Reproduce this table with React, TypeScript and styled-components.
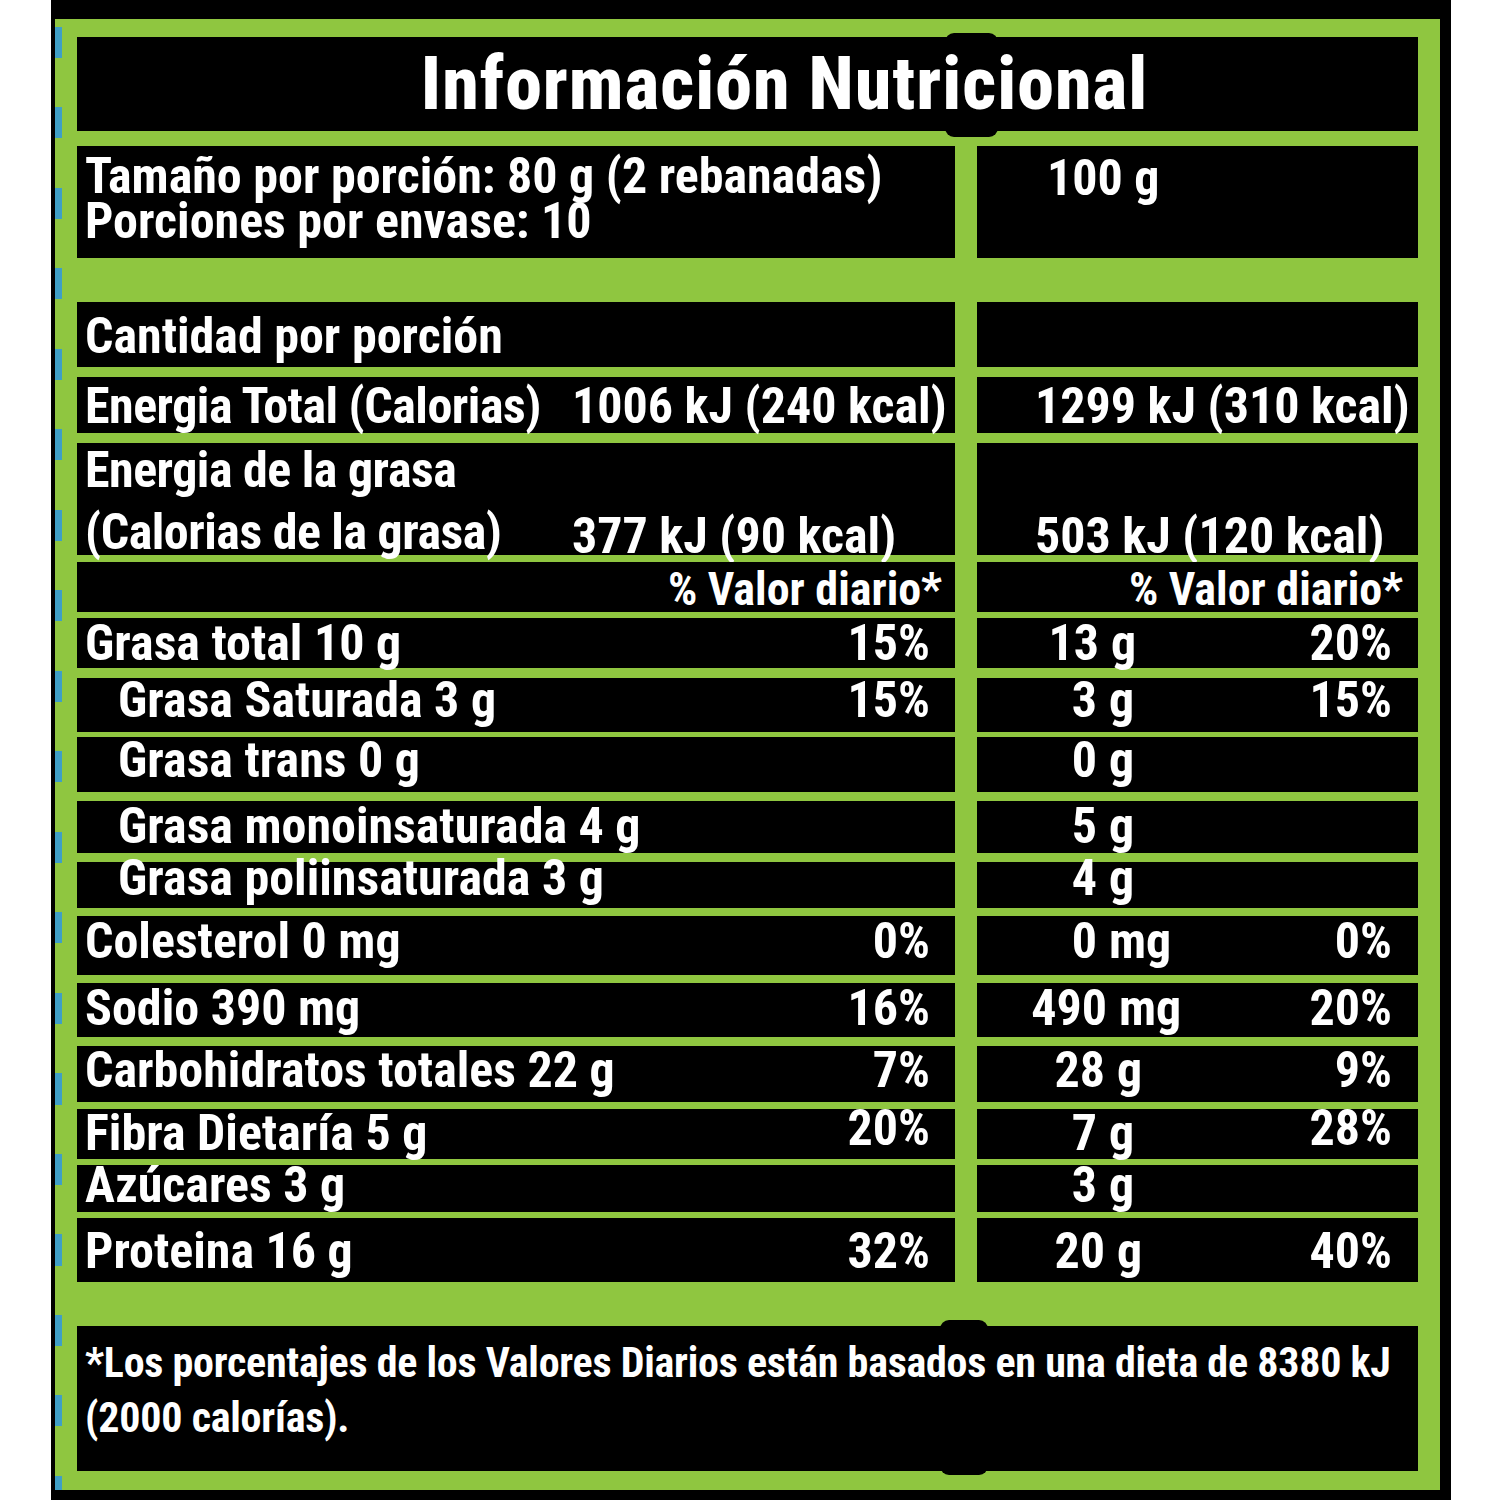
import React from "react";
import styled, { createGlobalStyle } from "styled-components";

const GREEN = "#8fc640";

const GlobalStyle = createGlobalStyle`
  html, body { margin: 0; padding: 0; background: #ffffff; }
  body {
    font-family: "Roboto Condensed", Roboto, "Liberation Sans", sans-serif;
    font-stretch: 75%;
    font-weight: 700;
    color: #ffffff;
  }
`;

const Page = styled.div`
  width: 1500px;
  height: 1500px;
  overflow: hidden;
  background: #ffffff;
  padding-left: 51px;
  box-sizing: border-box;
`;

const Panel = styled.div`
  width: 1400px;
  background: #000000;
  padding: 19px 11px 10px 4px;
  box-sizing: border-box;
`;

const Frame = styled.div`
  position: relative;
  z-index: 0;
  background: ${GREEN};
  padding: 18px 22px 19px 22px;
  &::before {
    content: "";
    position: absolute;
    left: 0;
    top: 8px;
    bottom: 0;
    width: 7px;
    background: repeating-linear-gradient(
      to bottom,
      #3f9fc6 0 31px,
      transparent 31px 80.5px
    );
  }
`;

const Blob = styled.span<{ $x: number; $y: number; $w: number; $h: number }>`
  position: absolute;
  z-index: -1;
  left: ${(p) => p.$x}px;
  top: ${(p) => p.$y}px;
  width: ${(p) => p.$w}px;
  height: ${(p) => p.$h}px;
  background: #000000;
  border-radius: 9px;
`;

const Title = styled.h1`
  margin: 0;
  height: 94px;
  background: #000000;
  font-size: 74px;
  line-height: 94px;
  font-weight: 800;
  letter-spacing: 1px;
  text-align: center;
  padding-left: 74px;
  white-space: nowrap;
`;

const Row = styled.div<{ $gap: number; $h: number }>`
  display: grid;
  grid-template-columns: 878px 441px;
  column-gap: 22px;
  margin-top: ${(p) => p.$gap}px;
  height: ${(p) => p.$h}px;
`;

const Cell = styled.div<{ $pt?: number; $size?: number; $lh?: number }>`
  background: #000000;
  box-sizing: border-box;
  padding-top: ${(p) => p.$pt ?? 0}px;
  font-size: ${(p) => p.$size ?? 50}px;
  line-height: ${(p) => p.$lh ?? 30}px;
  white-space: nowrap;
`;

const LabelCell = styled(Cell)<{ $indent?: boolean }>`
  display: grid;
  grid-template-columns: 1fr auto;
  align-items: start;
  padding-left: ${(p) => (p.$indent ? 41 : 8)}px;
  padding-right: 25px;
`;

const EnergyLeft = styled(Cell)`
  display: grid;
  grid-template-columns: 487px auto;
  align-items: start;
  padding-left: 8px;
`;

const EnergyLabel = styled.span`
  letter-spacing: -0.5px;
`;

const EnergyRight = styled(Cell)`
  padding-left: 58px;
`;

const AmountCell = styled(Cell)<{ $shift?: number }>`
  display: grid;
  grid-template-columns: 120px auto 1fr auto;
  align-items: start;
  padding-left: ${(p) => p.$shift ?? 0}px;
  padding-right: 26px;
`;

const Num = styled.span`
  text-align: right;
`;

const Unit = styled.span`
  padding-left: 12px;
`;

const Pct = styled.span<{ $raise?: number }>`
  grid-column: -2 / -1;
  text-align: right;
  margin-top: ${(p) => -(p.$raise ?? 0)}px;
`;

const Text = styled.span<{ $drop?: number }>`
  display: block;
  margin-top: ${(p) => p.$drop ?? 0}px;
`;

const DvCell = styled(Cell)<{ $right: number }>`
  text-align: right;
  padding-right: ${(p) => p.$right}px;
`;

const ServingLeft = styled(Cell)`
  padding-left: 8px;
`;

const ServingRight = styled(Cell)`
  padding-left: 70px;
`;

const Footnote = styled.div`
  margin-top: 44px;
  height: 145px;
  background: #000000;
  box-sizing: border-box;
  padding: 9px 8px 0;
  font-size: 42px;
  line-height: 55px;
  letter-spacing: -0.25px;
  white-space: nowrap;
`;

type Nutrient = {
  label: string;
  indent?: boolean;
  pct?: string;
  num: string;
  unit: string;
  pct2?: string;
  gap: number;
  h: number;
  pt: number;
  raise?: number;
  shift?: number;
};

const nutrients: Nutrient[] = [
  { label: "Grasa total 10 g", pct: "15%", num: "13", unit: "g", pct2: "20%", gap: 6, h: 50, pt: 10, shift: 2 },
  { label: "Grasa Saturada 3 g", indent: true, pct: "15%", num: "3", unit: "g", pct2: "15%", gap: 10, h: 54, pt: 7 },
  { label: "Grasa trans 0 g", indent: true, num: "0", unit: "g", gap: 5, h: 55, pt: 8 },
  { label: "Grasa monoinsaturada 4 g", indent: true, num: "5", unit: "g", gap: 9, h: 52, pt: 10 },
  { label: "Grasa poliinsaturada 3 g", indent: true, num: "4", unit: "g", gap: 9, h: 46, pt: 1 },
  { label: "Colesterol 0 mg", pct: "0%", num: "0", unit: "mg", pct2: "0%", gap: 8, h: 59, pt: 10 },
  { label: "Sodio 390 mg", pct: "16%", num: "490", unit: "mg", pct2: "20%", gap: 8, h: 54, pt: 10, shift: 10 },
  { label: "Carbohidratos totales 22 g", pct: "7%", num: "28", unit: "g", pct2: "9%", gap: 9, h: 56, pt: 9, shift: 8 },
  { label: "Fibra Dietaría 5 g", pct: "20%", num: "7", unit: "g", pct2: "28%", gap: 7, h: 50, pt: 9, raise: 5 },
  { label: "Azúcares 3 g", num: "3", unit: "g", gap: 6, h: 47, pt: 5 },
  { label: "Proteina 16 g", pct: "32%", num: "20", unit: "g", pct2: "40%", gap: 6, h: 64, pt: 18, shift: 8 },
];

export default function App() {
  return (
    <>
      <GlobalStyle />
      <Page>
        <Panel>
          <Frame>
            <Blob $x={890} $y={14} $w={53} $h={104} />
            <Blob $x={885} $y={1301} $w={48} $h={155} />

            <Title>Información Nutricional</Title>

            <Row $gap={15} $h={112}>
              <ServingLeft $pt={8} $lh={45}>
                <Text>Tamaño por porción: 80 g (2 rebanadas)</Text>
                <Text>Porciones por envase: 10</Text>
              </ServingLeft>
              <ServingRight $pt={10} $lh={45}>
                100 g
              </ServingRight>
            </Row>

            <Row $gap={44} $h={65}>
              <LabelCell $pt={19}>
                <span>Cantidad por porción</span>
              </LabelCell>
              <Cell />
            </Row>

            <Row $gap={10} $h={56}>
              <EnergyLeft $pt={14}>
                <EnergyLabel>Energia Total (Calorias)</EnergyLabel>
                <span>1006 kJ (240 kcal)</span>
              </EnergyLeft>
              <EnergyRight $pt={14}>1299 kJ (310 kcal)</EnergyRight>
            </Row>

            <Row $gap={10} $h={112}>
              <EnergyLeft $pt={12}>
                <EnergyLabel>
                  <Text>Energia de la grasa</Text>
                  <Text $drop={32}>(Calorias de la grasa)</Text>
                </EnergyLabel>
                <Text $drop={66}>377 kJ (90 kcal)</Text>
              </EnergyLeft>
              <EnergyRight $pt={78}>503 kJ (120 kcal)</EnergyRight>
            </Row>

            <Row $gap={7} $h={50}>
              <DvCell $pt={12} $size={46} $right={13}>
                % Valor diario*
              </DvCell>
              <DvCell $pt={12} $size={46} $right={15}>
                % Valor diario*
              </DvCell>
            </Row>

            {nutrients.map((n) => (
              <Row key={n.label} $gap={n.gap} $h={n.h}>
                <LabelCell $pt={n.pt} $indent={n.indent}>
                  <span>{n.label}</span>
                  {n.pct && <Pct $raise={n.raise}>{n.pct}</Pct>}
                </LabelCell>
                <AmountCell $pt={n.pt} $shift={n.shift}>
                  <Num>{n.num}</Num>
                  <Unit>{n.unit}</Unit>
                  {n.pct2 && <Pct $raise={n.raise}>{n.pct2}</Pct>}
                </AmountCell>
              </Row>
            ))}

            <Footnote>
              <Text>
                *Los porcentajes de los Valores Diarios están basados en una
                dieta de 8380 kJ
              </Text>
              <Text>(2000 calorías).</Text>
            </Footnote>
          </Frame>
        </Panel>
      </Page>
    </>
  );
}
